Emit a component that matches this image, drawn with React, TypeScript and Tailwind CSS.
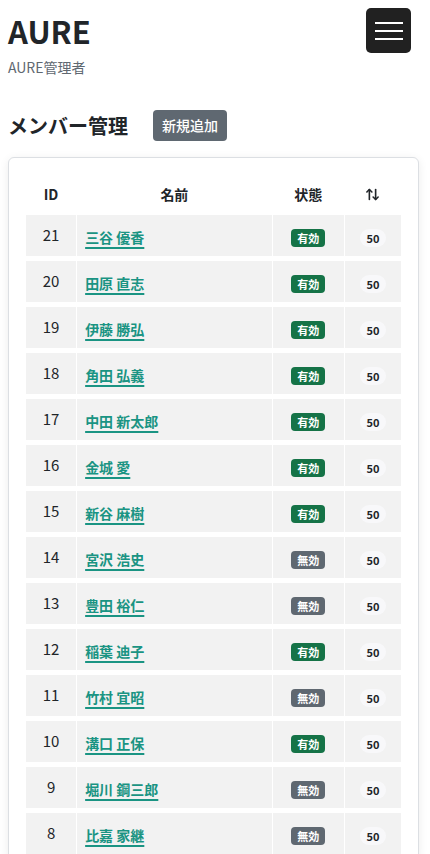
import React from 'react';
import { ArrowUpDown } from 'lucide-react';

type Member = {
  id: number;
  name: string;
  active: boolean;
  score: number;
};

const members: Member[] = [
  { id: 21, name: '三谷 優香', active: true, score: 50 },
  { id: 20, name: '田原 直志', active: true, score: 50 },
  { id: 19, name: '伊藤 勝弘', active: true, score: 50 },
  { id: 18, name: '角田 弘義', active: true, score: 50 },
  { id: 17, name: '中田 新太郎', active: true, score: 50 },
  { id: 16, name: '金城 愛', active: true, score: 50 },
  { id: 15, name: '新谷 麻樹', active: true, score: 50 },
  { id: 14, name: '宮沢 浩史', active: false, score: 50 },
  { id: 13, name: '豊田 裕仁', active: false, score: 50 },
  { id: 12, name: '稲葉 迪子', active: true, score: 50 },
  { id: 11, name: '竹村 宜昭', active: false, score: 50 },
  { id: 10, name: '溝口 正保', active: true, score: 50 },
  { id: 9, name: '堀川 鋼三郎', active: false, score: 50 },
  { id: 8, name: '比嘉 家継', active: false, score: 50 },
];

const StatusBadge = ({ active }: { active: boolean }) => (
  <span
    className={`inline-flex h-[18px] w-[34px] items-center justify-center rounded-[4px] text-[11px] font-bold leading-none text-white ${
      active ? 'bg-[#157347]' : 'bg-[#5f6871]'
    }`}
  >
    {active ? '有効' : '無効'}
  </span>
);

const App = () => {
  return (
    <div className="min-h-[854px] bg-white text-[#212529] [font-family:'Noto_Sans_CJK_JP','Noto_Sans',sans-serif]">
      <header className="flex items-start justify-between pl-2 pr-[19px] pt-2">
        <div className="flex flex-col">
          <h1 className="mt-[3px] text-[31px] font-bold leading-[40px]">AURE</h1>
          <p className="mt-[6px] text-[14px] leading-[20px] text-[#5f6871]">AURE管理者</p>
        </div>
        <button className="flex h-[45px] w-[45px] flex-col items-center justify-center gap-[6px] rounded-[5px] bg-[#212121]">
          <span className="h-[2px] w-[28px] bg-white" />
          <span className="h-[2px] w-[28px] bg-white" />
          <span className="h-[2px] w-[28px] bg-white" />
        </button>
      </header>

      <div className="mt-[33px] flex items-center pl-2">
        <h2 className="text-[20px] font-bold leading-[28px]">メンバー管理</h2>
        <button className="ml-[25px] flex h-[31px] w-[74px] items-center justify-center rounded-[4px] bg-[#5f6871] text-[14px] font-medium text-white">
          新規追加
        </button>
      </div>

      <div className="ml-2 mt-[16px] w-[411px] rounded-[6px] border border-[#dcdfe3] bg-white p-4 pb-0 shadow-[0_2px_10px_rgba(0,0,0,0.08)]">
        <table className="w-full table-fixed border-separate [border-spacing:1px_5px]">
          <colgroup>
            <col className="w-[50px]" />
            <col className="w-[194px]" />
            <col className="w-[71px]" />
            <col className="w-[56px]" />
          </colgroup>
          <thead>
            <tr className="h-[31px] text-[14px] font-bold">
              <th className="text-center">ID</th>
              <th className="text-center">名前</th>
              <th className="text-center">状態</th>
              <th className="text-center">
                <ArrowUpDown size={15} strokeWidth={2.6} className="mx-auto" />
              </th>
            </tr>
          </thead>
          <tbody>
            {members.map((m) => (
              <tr key={m.id} className="h-[41px]">
                <td className="bg-[#f2f2f2] text-center text-[15px]">{m.id}</td>
                <td className="bg-[#f2f2f2] pl-2">
                  <a
                    href="#"
                    className="text-[14px] font-bold text-[#1a9483] underline decoration-[1.5px] underline-offset-[4px]"
                  >
                    {m.name}
                  </a>
                </td>
                <td className="bg-[#f2f2f2] text-center">
                  <StatusBadge active={m.active} />
                </td>
                <td className="bg-[#f2f2f2] text-center">
                  <span className="inline-flex h-[18px] w-[26px] items-center justify-center rounded-full bg-[#f8f8fa] text-[11px] font-bold leading-none">
                    {m.score}
                  </span>
                </td>
              </tr>
            ))}
          </tbody>
        </table>
      </div>
    </div>
  );
};

export default App;
